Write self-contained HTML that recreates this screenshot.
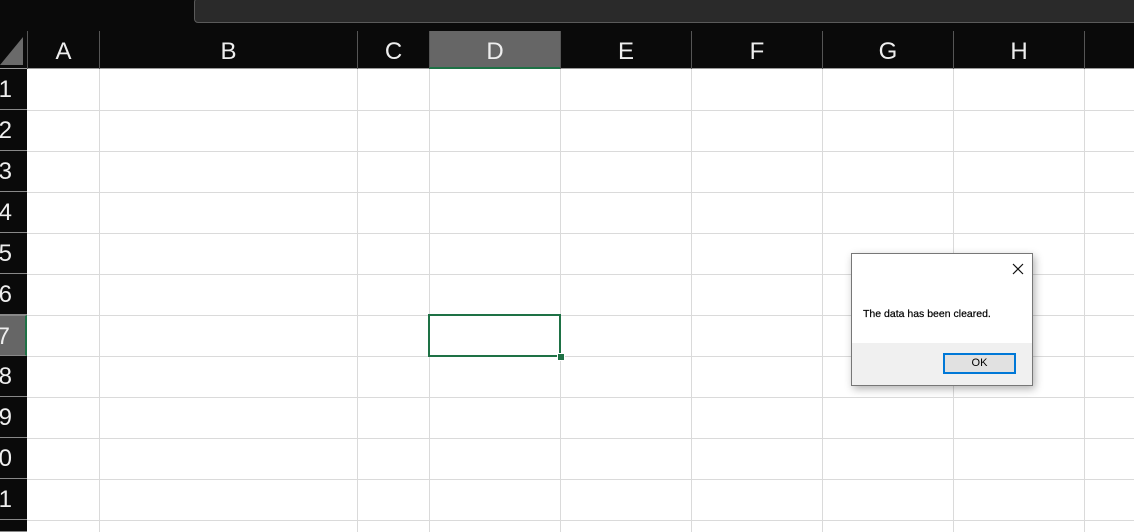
<!DOCTYPE html>
<html><head><style>
html,body{margin:0;width:1134px;height:532px;overflow:hidden}
body{background:#fff;position:relative;font-family:"Liberation Sans",sans-serif}
.a{position:absolute}
.top{left:0;top:0;width:1134px;height:31px;background:#0a0a0a}
.fb{left:194px;top:-2px;width:960px;height:25px;background:#2a2a2a;border:1px solid #5a5a5a;border-radius:4px;box-sizing:border-box}
.hdr{top:31px;height:38px;background:#0a0a0a;left:0;width:1134px;border-bottom:1px solid #9a9a9a;box-sizing:border-box}
.ch{position:absolute;top:31px;height:38px;color:#eee;font-size:24px;text-align:center;line-height:42px;border-left:1px solid #555;box-sizing:border-box}
.rh{position:absolute;left:0;width:27px;height:41px;background:#0a0a0a;border-bottom:1px solid #888;box-sizing:border-box;overflow:hidden}
.rh span{position:absolute;right:15px;top:6px;color:#eee;font-size:24px;line-height:30px}
.vl{position:absolute;top:69px;width:1px;height:463px;background:#dadada}
.hl{position:absolute;left:27px;width:1107px;height:1px;background:#dadada}
</style></head><body>
<div class="a top"></div>
<div class="a fb"></div>
<div class="a hdr"></div>
<svg class="a" style="left:0;top:37px" width="24" height="30"><polygon points="23,0 23,28 0,28" fill="#6a6a6a"/></svg>
<div class="ch" style="left:27px;width:72px">A</div>
<div class="ch" style="left:99px;width:258px">B</div>
<div class="ch" style="left:357px;width:72px">C</div>
<div class="ch" style="left:429px;width:131px;background:#666;border-bottom:2px solid #1e7145;height:38px">D</div>
<div class="ch" style="left:560px;width:131px">E</div>
<div class="ch" style="left:691px;width:131px">F</div>
<div class="ch" style="left:822px;width:131px">G</div>
<div class="ch" style="left:953px;width:131px">H</div>
<div class="ch" style="left:1084px;width:60px"></div>

<div class="rh" style="top:69px"><span>1</span></div>
<div class="rh" style="top:110px"><span>2</span></div>
<div class="rh" style="top:151px"><span>3</span></div>
<div class="rh" style="top:192px"><span>4</span></div>
<div class="rh" style="top:233px"><span>5</span></div>
<div class="rh" style="top:274px"><span>6</span></div>
<div class="rh" style="top:315px;background:#666;border-top:1px solid #888;border-right:2px solid #1e7145"><span style="right:15px">7</span></div>
<div class="rh" style="top:356px"><span>8</span></div>
<div class="rh" style="top:397px"><span>9</span></div>
<div class="rh" style="top:438px"><span>10</span></div>
<div class="rh" style="top:479px"><span>11</span></div>
<div class="rh" style="top:520px;height:12px"></div>

<div class="vl" style="left:99px"></div>
<div class="vl" style="left:357px"></div>
<div class="vl" style="left:429px"></div>
<div class="vl" style="left:560px"></div>
<div class="vl" style="left:691px"></div>
<div class="vl" style="left:822px"></div>
<div class="vl" style="left:953px"></div>
<div class="vl" style="left:1084px"></div>
<div class="hl" style="top:110px"></div>
<div class="hl" style="top:151px"></div>
<div class="hl" style="top:192px"></div>
<div class="hl" style="top:233px"></div>
<div class="hl" style="top:274px"></div>
<div class="hl" style="top:315px"></div>
<div class="hl" style="top:356px"></div>
<div class="hl" style="top:397px"></div>
<div class="hl" style="top:438px"></div>
<div class="hl" style="top:479px"></div>
<div class="hl" style="top:520px"></div>

<div class="a" style="left:428px;top:314px;width:133px;height:43px;border:2px solid #1e7145;box-sizing:border-box"></div>
<div class="a" style="left:557px;top:353px;width:6px;height:6px;background:#1e7145;border:1px solid #fff"></div>

<div class="a" style="left:851px;top:253px;width:182px;height:133px;background:#fff;border:1px solid #777;box-sizing:border-box;box-shadow:2px 3px 8px rgba(0,0,0,.3)">
  <svg class="a" style="left:160px;top:9px" width="12" height="12"><path d="M1 1L11 11M11 1L1 11" stroke="#111" stroke-width="1.2"/></svg>
  <div class="a" style="left:11px;top:54px;font-size:10.5px;color:#000;-webkit-text-stroke:0.2px #000">The data has been cleared.</div>
  <div class="a" style="left:0;top:89px;width:180px;height:42px;background:#f0f0f0"></div>
  <div class="a" style="left:91px;top:99px;width:73px;height:21px;border:2px solid #0078d7;background:#e1e1e1;box-sizing:border-box;font-size:11px;text-align:center;line-height:17px;color:#000">OK</div>
</div>
</body></html>
